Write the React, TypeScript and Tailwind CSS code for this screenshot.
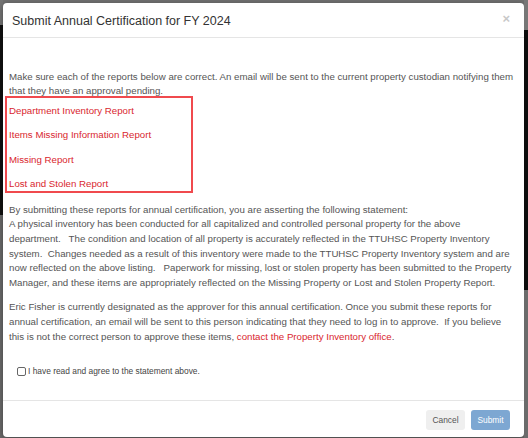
export default function App() {
  const links = [
    'Department Inventory Report',
    'Items Missing Information Report',
    'Missing Report',
    'Lost and Stolen Report',
  ]

  return (
    <div className="flex h-[438px] w-[528px] bg-[#6f6f6f] font-['Liberation_Sans',Arial,sans-serif]">
      {/* page behind the dimmed backdrop */}
      <div className="flex w-[3px] flex-col">
        <div className="h-[25px] bg-[#747474]" />
        <div className="h-[190px] bg-[#111]" />
        <div className="flex-1 bg-[#6b6b6b]" />
      </div>

      <div className="flex flex-1 flex-col pt-[3px] pb-[1px]">
        <div className="flex h-[434px] flex-col rounded-[4px] bg-white shadow-[0_2px_6px_rgba(0,0,0,0.4)]">
          {/* header */}
          <div className="relative flex h-[35px] items-center border-b border-[#e5e5e5] px-[9px] pt-[2px]">
            <h4 className="text-[12.5px] leading-[18px] text-[#333]">Submit Annual Certification for FY 2024</h4>
            <span className="absolute right-[14px] top-[9px] text-[13px] font-bold leading-none text-[#c8c8c8]">
              ×
            </span>
          </div>

          {/* body */}
          <div className="flex flex-1 flex-col px-[6px] pt-[32px] text-[9.7px] text-[#555]">
            <p className="leading-[14px]">
              Make sure each of the reports below are correct. An email will be sent to the current
              property custodian notifying them that they have an approval pending.
            </p>

            <div className="-ml-[4px] -mt-[2px] flex w-[188px] flex-col gap-[9.6px] border-2 border-[#f04a4e] pl-[2px] pt-[4.5px]">
              {links.map(l => (
                <a key={l} className="leading-[15px] text-[#d9262e]">
                  {l}
                </a>
              ))}
            </div>

            <p className="mt-[9.5px] leading-[14.6px]">
              By submitting these reports for annual certification, you are asserting the following
              statement:
              <br />
              A physical inventory has been conducted for all capitalized and controlled personal
              property for the above department.{'\u00a0\u00a0 '}The condition and location of all
              property is accurately reflected in the TTUHSC Property Inventory system.{'\u00a0 '}
              Changes needed as a result of this inventory were made to the TTUHSC Property Inventory
              system and are now reflected on the above listing.{'\u00a0\u00a0 '}Paperwork for
              missing, lost or stolen property has been submitted to the Property Manager, and these
              items are appropriately reflected on the Missing Property or Lost and Stolen Property
              Report.
            </p>

            <p className="mt-[9px] leading-[15px]">
              Eric Fisher is currently designated as the approver for this annual certification. Once
              you submit these reports for annual certification, an email will be sent to this person
              indicating that they need to log in to approve.{'\u00a0 '}If you believe this is not the
              correct person to approve these items,{' '}
              <a className="text-[#d9262e]">contact the Property Inventory office</a>.
            </p>

            <label className="ml-[8px] mt-[21px] flex items-center gap-[2px] text-[8.4px] text-[#444]">
              <span className="h-[9px] w-[9px] rounded-[2px] border border-[#666] bg-white" />
              I have read and agree to the statement above.
            </label>
          </div>

          {/* footer */}
          <div className="flex justify-end gap-[6px] border-t border-[#e5e5e5] pr-[14px] pt-[9px] pb-[7px]">
            <button className="h-[20px] w-[39px] rounded-[3px] bg-[#efefef] text-[8.4px] text-[#555]">
              Cancel
            </button>
            <button className="h-[20px] w-[39px] rounded-[3px] bg-[#7da7d2] text-[8.4px] text-white">
              Submit
            </button>
          </div>
        </div>
      </div>

      <div className="flex w-[4px] flex-col">
        <div className="h-[30px] bg-[#777]" />
        <div className="h-[260px] bg-[#0d0d0d]" />
        <div className="flex-1 bg-[#6b6b6b]" />
      </div>
    </div>
  )
}
